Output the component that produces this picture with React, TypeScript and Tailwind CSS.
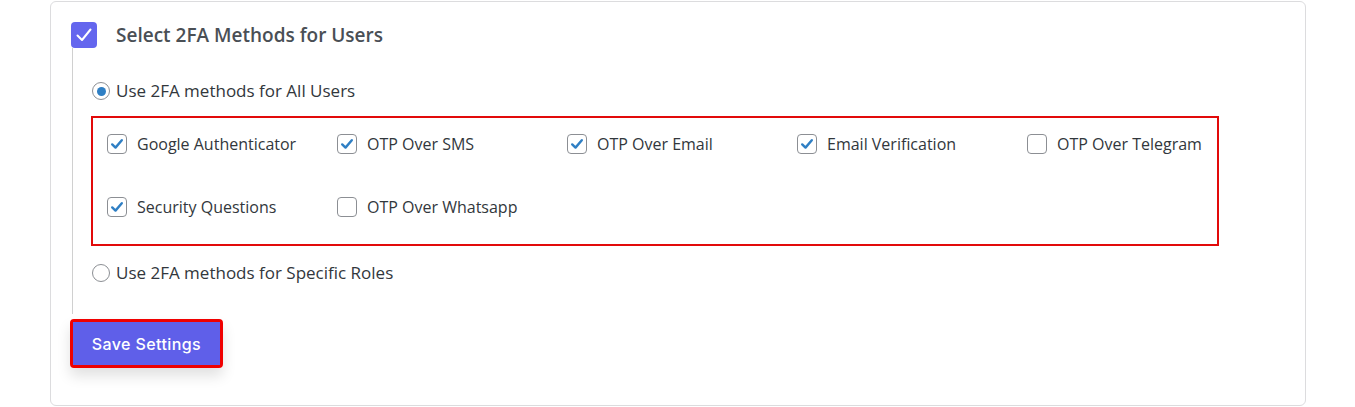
import React from "react";

const font = { fontFamily: '"Open Sans", "Noto Sans", Arial, sans-serif' };

function Check({ checked }: { checked: boolean }) {
  return (
    <span className="flex h-[20px] w-[20px] shrink-0 items-center justify-center rounded-[4px] border border-[#8c8f94] bg-white">
      {checked && (
        <svg width="16" height="16" viewBox="0 0 16 16" fill="none">
          <path d="M3.2 8.4 L6.5 11.6 L12.8 4.2" stroke="#2f7fc4" strokeWidth="2.4" strokeLinecap="round" strokeLinejoin="round" />
        </svg>
      )}
    </span>
  );
}

function Radio({ checked }: { checked: boolean }) {
  return (
    <span className="flex h-[18px] w-[18px] shrink-0 items-center justify-center rounded-full border border-[#8c8f94] bg-white">
      {checked && <span className="h-[9px] w-[9px] rounded-full bg-[#2f7fc4]" />}
    </span>
  );
}

const methods: { label: string; checked: boolean }[] = [
  { label: "Google Authenticator", checked: true },
  { label: "OTP Over SMS", checked: true },
  { label: "OTP Over Email", checked: true },
  { label: "Email Verification", checked: true },
  { label: "OTP Over Telegram", checked: false },
  { label: "Security Questions", checked: true },
  { label: "OTP Over Whatsapp", checked: false },
];

export default function App() {
  return (
    <div className="min-h-[407px] w-[1355px] bg-white" style={font}>
      <div className="ml-[50px] mt-[1px] h-[405px] w-[1256px] rounded-[6px] border border-[#dcdcde] bg-white pl-[20px] pt-[20px]">
        <div className="flex h-[26px] items-center gap-[19px]">
          <span className="flex h-[26px] w-[26px] items-center justify-center rounded-[4px] bg-[#6466ee]">
            <svg width="20" height="20" viewBox="0 0 20 20" fill="none">
              <path d="M3.5 10.5 L8 15 L16.5 4.5" stroke="white" strokeWidth="2" strokeLinecap="round" strokeLinejoin="round" />
            </svg>
          </span>
          <span className="text-[19px] font-semibold leading-[26px] text-[#4a4f55]">Select 2FA Methods for Users</span>
        </div>

        <div className="ml-[1px] border-l border-[#d0d0d0] pb-[31px] pl-[19px] pt-[33px]">
          <label className="flex h-[20px] items-center gap-[6px]">
            <Radio checked />
            <span className="text-[17px] font-medium leading-[20px] text-[#32373c]">Use 2FA methods for All Users</span>
          </label>

          <div className="ml-[-1px] mt-[15px] h-[130px] w-[1128px] border-2 border-[#e20a0a] pl-[14px] pt-[16px]">
            <div className="grid grid-cols-[repeat(5,230px)] gap-y-[43px]">
              {methods.map((m) => (
                <label key={m.label} className="flex h-[20px] items-center gap-[10px]">
                  <Check checked={m.checked} />
                  <span className="whitespace-nowrap text-[16px] font-medium leading-[20px] text-[#32373c]">{m.label}</span>
                </label>
              ))}
            </div>
          </div>

          <label className="mt-[17px] flex h-[20px] items-center gap-[6px]">
            <Radio checked={false} />
            <span className="text-[17px] font-medium leading-[20px] text-[#32373c]">Use 2FA methods for Specific Roles</span>
          </label>
        </div>

        <div className="ml-[-1px] mt-[5px] inline-block rounded-[4px] border-[3px] border-[#f00000] shadow-[0_8px_14px_rgba(0,0,0,0.12)]">
          <button
            className="flex h-[43px] w-[147px] items-center justify-center bg-[#5f5fe9] text-[16px] font-medium tracking-[0.4px] text-white"
            style={{ fontFamily: '"Inter", "Noto Sans", Arial, sans-serif' }}
          >
            Save Settings
          </button>
        </div>
      </div>
    </div>
  );
}
